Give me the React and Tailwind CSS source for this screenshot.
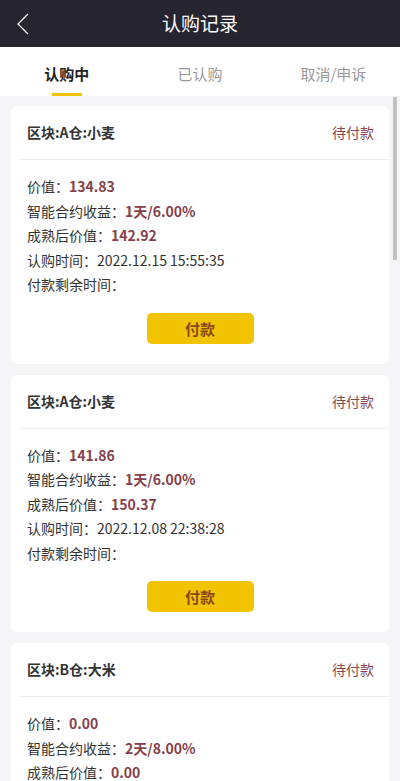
import React, { useState } from "react";

const orders = [
  {
    name: "区块:A仓:小麦",
    value: "134.83",
    earn: "1天/6.00%",
    after: "142.92",
    time: "2022.12.15 15:55:35",
  },
  {
    name: "区块:A仓:小麦",
    value: "141.86",
    earn: "1天/6.00%",
    after: "150.37",
    time: "2022.12.08 22:38:28",
  },
  {
    name: "区块:B仓:大米",
    value: "0.00",
    earn: "2天/8.00%",
    after: "0.00",
    time: "2022.12.08 10:12:46",
  },
];

const tabs = ["认购中", "已认购", "取消/申诉"];

const OrderCard = ({ order }) => {
  return (
    <div className="bg-white rounded-[6px]">
      <div className="flex items-center justify-between h-[53px] pl-4 pr-[15px]">
        <span className="font-bold text-[14px] text-[#333]">{order.name}</span>
        <span className="text-[14px] text-[#8a4750]">待付款</span>
      </div>
      <div className="ml-[9px] h-px bg-[#ececee]"></div>
      <div className="px-4 pt-[14px] pb-[20px] text-[14px] leading-[24.5px] text-[#333]">
        <div>
          价值：<span className="font-bold text-[#863f4b]">{order.value}</span>
        </div>
        <div>
          智能合约收益：<span className="font-bold text-[#863f4b]">{order.earn}</span>
        </div>
        <div>
          成熟后价值：<span className="font-bold text-[#863f4b]">{order.after}</span>
        </div>
        <div>认购时间：{order.time}</div>
        <div>付款剩余时间：</div>
        <div className="flex justify-center mt-[16px]">
          <button className="w-[107px] h-[31px] rounded-[5px] bg-[#f2c300] text-[#8a4a1e] text-[15px] font-bold leading-none">
            付款
          </button>
        </div>
      </div>
    </div>
  );
};

export default function App() {
  const [active, setActive] = useState(0);

  return (
    <div
      className="w-[400px] h-[781px] overflow-hidden flex flex-col bg-[#f5f4f7]"
      style={{ fontFamily: '"Noto Sans CJK SC", "Noto Sans", sans-serif' }}
    >
      {/* top bar */}
      <div className="h-[47px] shrink-0 bg-[#26252f] flex items-center relative">
        <svg
          className="absolute left-[15px] top-[13px]"
          width="16"
          height="22"
          viewBox="0 0 16 22"
          fill="none"
        >
          <polyline points="13,1 3,11 13,21" stroke="#fff" strokeWidth="1.3" />
        </svg>
        <h1 className="w-full text-center text-white text-[19px]">认购记录</h1>
      </div>

      {/* tabs */}
      <div className="h-[49px] shrink-0 bg-white grid grid-cols-3">
        {tabs.map((t, i) => (
          <div
            key={t}
            onClick={() => setActive(i)}
            className="flex flex-col items-center justify-end cursor-pointer"
          >
            <span
              className={
                i === active
                  ? "text-[15px] font-bold text-[#222]"
                  : "text-[15px] text-[#999]"
              }
            >
              {t}
            </span>
            <span
              className={
                i === active
                  ? "mt-[8px] w-[30px] h-[3px] bg-[#f2c300]"
                  : "mt-[8px] w-[30px] h-[3px] bg-transparent"
              }
            ></span>
          </div>
        ))}
      </div>

      {/* list */}
      <div className="relative flex-1 overflow-hidden">
        <div className="px-[11px] pt-[10px] flex flex-col gap-[11px]">
          {orders.map((o, i) => (
            <OrderCard key={i} order={o} />
          ))}
        </div>
        <div className="absolute right-[3px] top-[1px] w-[4px] h-[163px] bg-[#c1c1c1]"></div>
      </div>
    </div>
  );
}
